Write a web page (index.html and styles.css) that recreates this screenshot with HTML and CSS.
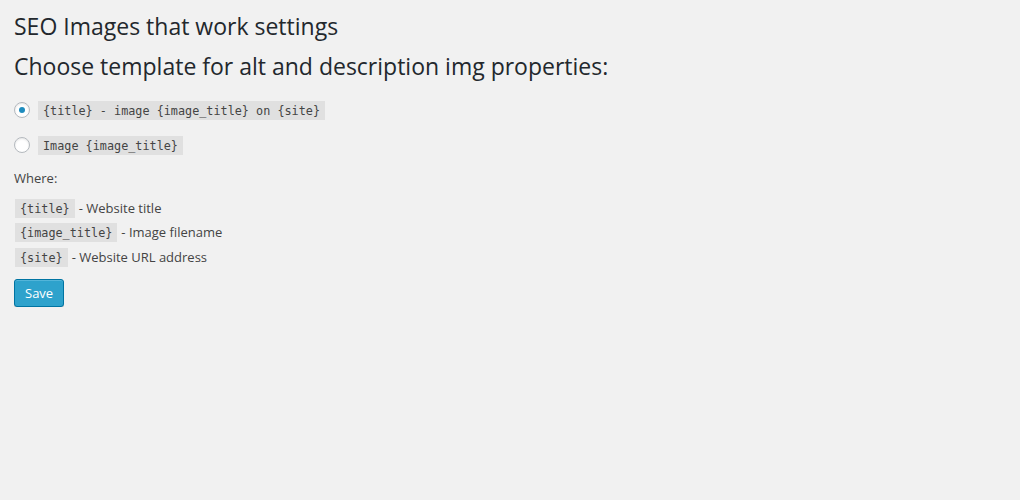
FILE: index.html
```html
<!DOCTYPE html>
<html>
<head>
<meta charset="utf-8">
<link rel="stylesheet" href="styles.css">
</head>
<body>
<div class="wrap">
  <h2 class="page-title">SEO Images that work settings</h2>
  <h2 class="section-title">Choose template for alt and description img properties:</h2>
  <form class="settings">
    <label class="choice">
      <input type="radio" name="tpl" class="radio" checked>
      <code class="tag">{title} - image {image_title} on {site}</code>
    </label>
    <label class="choice">
      <input type="radio" name="tpl" class="radio">
      <code class="tag">Image {image_title}</code>
    </label>
    <p class="where">Where:</p>
    <ul class="legend">
      <li><code class="tag">{title}</code> - Website title</li>
      <li><code class="tag">{image_title}</code> - Image filename</li>
      <li><code class="tag">{site}</code> - Website URL address</li>
    </ul>
    <div class="actions">
      <button type="button" class="button-primary">Save</button>
    </div>
  </form>
</div>
</body>
</html>
```
FILE: styles.css
```css
html, body {
  margin: 0;
  padding: 0;
  background: #f1f1f1;
}
body {
  font-family: "Open Sans", "Liberation Sans", sans-serif;
  font-size: 13px;
  color: #444;
  line-height: 1.4em;
}
.wrap {
  padding: 12px 14px 0 14px;
}
.page-title,
.section-title {
  margin: 0;
  font-weight: 400;
  font-size: 23px;
  line-height: 29px;
  color: #23282d;
}
.section-title {
  margin-top: 11px;
}
.settings {
  display: flex;
  flex-direction: column;
  align-items: flex-start;
  margin-top: 19px;
}
.choice {
  display: flex;
  align-items: center;
  gap: 8px;
  height: 20px;
  margin-bottom: 15px;
}
.radio {
  -webkit-appearance: none;
  appearance: none;
  margin: 0;
  width: 16px;
  height: 16px;
  border: 1px solid #b4b9be;
  border-radius: 50%;
  background: #fff;
  box-shadow: inset 0 1px 2px rgba(0,0,0,0.1);
  box-sizing: border-box;
  display: flex;
  align-items: center;
  justify-content: center;
}
.radio:checked::before {
  content: "";
  width: 6px;
  height: 6px;
  border-radius: 50%;
  background: #1e8cbe;
}
.tag {
  font-family: "DejaVu Sans Mono", "Liberation Mono", monospace;
  font-size: 11.8px;
  line-height: 14px;
  padding: 3px 5px 2px;
  background: rgba(0,0,0,0.07);
  color: #444;
}
.where {
  margin: -2px 0 0;
  height: 20px;
  line-height: 20px;
}
.legend {
  list-style: none;
  margin: 10px 0 0;
  padding: 0;
  display: flex;
  flex-direction: column;
  gap: 4.5px;
}
.legend li {
  display: flex;
  align-items: center;
  gap: 4px;
  height: 20px;
}
.legend .tag {
  margin-left: 1px;
}
.actions {
  margin-top: 12px;
}
.button-primary {
  font-family: "Open Sans", "Liberation Sans", sans-serif;
  font-size: 13px;
  height: 28px;
  width: 50px;
  padding: 0 10px 1px;
  border: 1px solid #0074a2;
  border-radius: 3px;
  background: #2ea2cc;
  color: #fff;
  box-shadow: inset 0 1px 0 rgba(120,200,230,0.5), 0 1px 0 rgba(0,0,0,0.15);
  cursor: pointer;
}
```
